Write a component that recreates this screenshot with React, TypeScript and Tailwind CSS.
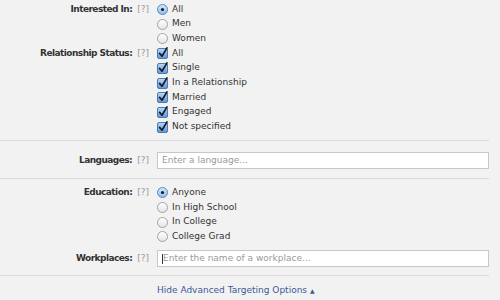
import React from "react";

const font = { fontFamily: '"DejaVu Sans", "Liberation Sans", sans-serif' };

function Radio({ checked }: { checked?: boolean }) {
  return (
    <svg width="11" height="11" viewBox="0 0 11 11" className="shrink-0">
      <defs>
        <linearGradient id="rOff" x1="0" y1="0" x2="0" y2="1">
          <stop offset="0" stopColor="#ffffff" />
          <stop offset="1" stopColor="#e4e4e4" />
        </linearGradient>
        <linearGradient id="rOn" x1="0" y1="0" x2="0" y2="1">
          <stop offset="0" stopColor="#d6e8fb" />
          <stop offset="1" stopColor="#8fbdf0" />
        </linearGradient>
      </defs>
      <circle
        cx="5.5"
        cy="5.5"
        r="5"
        fill={checked ? "url(#rOn)" : "url(#rOff)"}
        stroke={checked ? "#4a7fc4" : "#9a9a9a"}
        strokeWidth="0.9"
      />
      {checked && <circle cx="5.5" cy="5.5" r="1.6" fill="#1c1c1c" />}
    </svg>
  );
}

function Check() {
  return (
    <svg width="11" height="12" viewBox="0 0 11 12" className="shrink-0">
      <defs>
        <linearGradient id="cOn" x1="0" y1="0" x2="0" y2="1">
          <stop offset="0" stopColor="#bcd8f6" />
          <stop offset="1" stopColor="#5b97dc" />
        </linearGradient>
      </defs>
      <rect x="0.5" y="1.5" width="10" height="10" rx="1.5" fill="url(#cOn)" stroke="#3d6fae" strokeWidth="0.9" />
      <path d="M2.6 6.4 L5 9.2 L10 0.9" fill="none" stroke="#151a22" strokeWidth="1.7" strokeLinecap="round" strokeLinejoin="round" />
    </svg>
  );
}

function Label({ text }: { text: string }) {
  return (
    <div className="w-[157px] shrink-0 flex items-center justify-end pr-[8px] h-[14.7px]">
      <span className="font-bold text-[#333333] tracking-[-0.55px]">{text}</span>
      <span className="ml-[5px] text-[#9a9a9a]">[?]</span>
    </div>
  );
}

function Option({ text, checked, box }: { text: string; checked?: boolean; box?: boolean }) {
  return (
    <div className="flex items-center h-[14.7px] gap-[4px] text-[#333333]">
      {box ? <Check /> : <Radio checked={checked} />}
      <span>{text}</span>
    </div>
  );
}

function InputRow({ label, placeholder, caret }: { label: string; placeholder: string; caret?: boolean }) {
  return (
    <div className="flex items-center">
      <div className="w-[157px] shrink-0 flex items-center justify-end pr-[8px]">
        <span className="font-bold text-[#333333] tracking-[-0.55px]">{label}</span>
        <span className="ml-[5px] text-[#9a9a9a]">[?]</span>
      </div>
      <div className="flex-1 h-[17px] bg-white border border-[#c3c7cf] flex items-center pl-[4px] text-[#9a9a9a] relative">
        {caret && <span className="absolute left-[4px] top-[3px] w-px h-[10px] bg-[#333]" />}
        <span className={caret ? "ml-[1px]" : ""}>{placeholder}</span>
      </div>
    </div>
  );
}

export default function App() {
  return (
    <div className="w-[500px] h-[300px] bg-[#f2f2f2] overflow-hidden text-[9px]" style={font}>
      <div className="w-[489px]">
        <div className="pt-[2px] pb-[5.7px]">
          <div className="flex">
            <Label text="Interested In:" />
            <div className="flex flex-col">
              <Option text="All" checked />
              <Option text="Men" />
              <Option text="Women" />
            </div>
          </div>
          <div className="flex">
            <Label text="Relationship Status:" />
            <div className="flex flex-col">
              <Option box text="All" />
              <Option box text="Single" />
              <Option box text="In a Relationship" />
              <Option box text="Married" />
              <Option box text="Engaged" />
              <Option box text="Not specified" />
            </div>
          </div>
        </div>
        <div className="border-t border-[#dadada] pt-[11px] pb-[9px]">
          <InputRow label="Languages:" placeholder="Enter a language..." />
        </div>
        <div className="border-t border-[#dadada] pt-[6.6px] pb-[8px]">
          <div className="flex">
            <Label text="Education:" />
            <div className="flex flex-col">
              <Option text="Anyone" checked />
              <Option text="In High School" />
              <Option text="In College" />
              <Option text="College Grad" />
            </div>
          </div>
          <div className="mt-[5.6px]">
            <InputRow label="Workplaces:" placeholder="Enter the name of a workplace..." caret />
          </div>
        </div>
        <div className="border-t border-[#dadada] pl-[157px] pt-[8.5px] text-[#3b5998] flex items-center gap-[3px]">
          <span>Hide Advanced Targeting Options</span>
          <span className="text-[6px] leading-none">▲</span>
        </div>
      </div>
    </div>
  );
}
